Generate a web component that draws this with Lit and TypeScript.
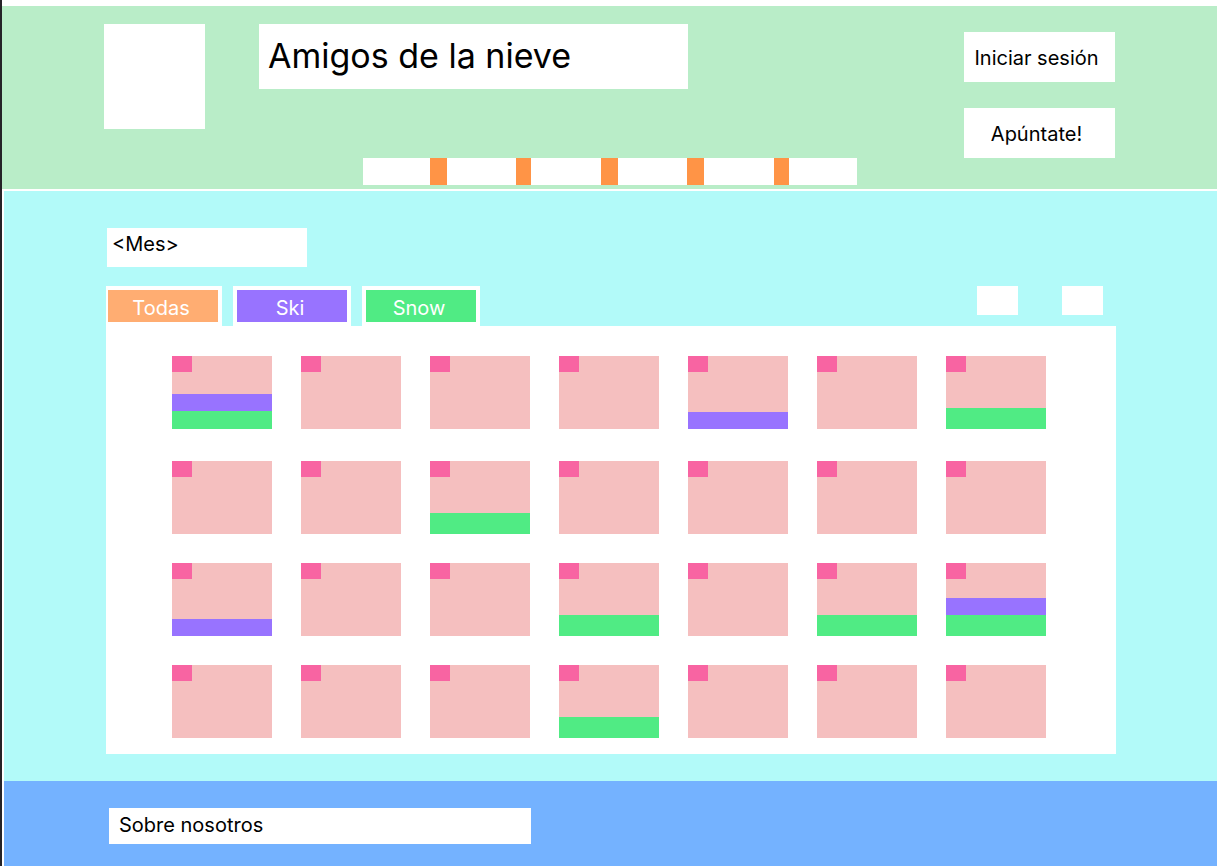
import { LitElement, html, css } from "lit";
import { customElement, state } from "lit/decorators.js";
import { classMap } from "lit/directives/class-map.js";

type Sport = "ski" | "snow";
type Filter = "todas" | Sport;

const FILTERS: { id: Filter; label: string }[] = [
  { id: "todas", label: "Todas" },
  { id: "ski", label: "Ski" },
  { id: "snow", label: "Snow" },
];

// Outings by day of the month.
const OUTINGS: Record<number, Sport[]> = {
  1: ["ski", "snow"],
  5: ["ski"],
  7: ["snow"],
  10: ["snow"],
  15: ["ski"],
  18: ["snow"],
  20: ["snow"],
  21: ["ski", "snow"],
  25: ["snow"],
};

const DAYS = Array.from({ length: 28 }, (_, i) => i + 1);
const SECTIONS = [1, 2, 3, 4, 5, 6];

@customElement("month-calendar")
export class MonthCalendar extends LitElement {
  static properties = { filter: { type: String } };
  declare filter: Filter;

  constructor() {
    super();
    this.filter = "todas";
  }

  static styles = css`
    :host {
      display: block;
      background: #fff;
      padding: 30px 70px 16px 66px;
    }
    .days {
      display: grid;
      grid-template-columns: repeat(7, 1fr);
      grid-template-rows: 105px 102px 102px 73px;
      column-gap: 29px;
      align-items: start;
      list-style: none;
      margin: 0;
      padding: 0;
    }
    .day {
      display: flex;
      flex-direction: column;
      height: 73px;
      background: #f5bfbf;
    }
    .number {
      width: 20px;
      height: 16px;
      margin-bottom: auto;
      background: #f864a2;
    }
    .outing {
      height: 17px;
    }
    .ski {
      background: #9873ff;
    }
    .snow {
      height: 21px;
      background: #50eb84;
    }
    .day:first-child .snow {
      height: 18px;
    }
  `;

  render() {
    return html`<ol class="days">
      ${DAYS.map((day) => {
        const outings = (OUTINGS[day] ?? []).filter(
          (s) => this.filter === "todas" || this.filter === s
        );
        return html`<li class="day">
          <span class="number"></span>
          ${outings.map((s) => html`<span class="outing ${s}"></span>`)}
        </li>`;
      })}
    </ol>`;
  }
}

@customElement("app-root")
export class AppRoot extends LitElement {
  @state() private filter: Filter = "todas";

  static styles = css`
    :host {
      display: flex;
      flex-direction: column;
      box-sizing: border-box;
      min-height: 100vh;
      padding: 6px 3px 0 0;
      border-left: 2px solid #252328;
      background: #fff;
      color: #000;
      font-family: Inter, "Liberation Sans", sans-serif;
      font-size: 20px;
      line-height: 24px;
    }
    button {
      font: inherit;
      color: inherit;
      border: 0;
      border-radius: 0;
      margin: 0;
      padding: 0;
      background: #fff;
      cursor: pointer;
    }
    header {
      background: #b9edc8;
      padding: 18px 102px 4px;
    }
    .top {
      display: flex;
      align-items: flex-start;
    }
    .logo {
      width: 101px;
      height: 105px;
      margin-right: 54px;
      background: #fff;
    }
    h1 {
      flex: 0 1 429px;
      box-sizing: border-box;
      margin: 0;
      padding: 12px 9px 13px;
      background: #fff;
      font-size: 34px;
      line-height: 40px;
      font-weight: 400;
    }
    .account {
      display: flex;
      flex-direction: column;
      gap: 26px;
      width: 151px;
      margin-left: auto;
      padding-top: 8px;
    }
    .account button {
      height: 50px;
      padding: 2px 6px 0 0;
      white-space: nowrap;
    }
    .sections {
      display: grid;
      grid-template-columns: 67fr 17fr 69fr 15fr 70fr 17fr 69fr 17fr 70fr 15fr 68fr;
      max-width: 494px;
      height: 27px;
      margin: 0 auto;
    }
    .sections a {
      background: #fff;
    }
    .divider {
      background: #ff9446;
    }
    main {
      margin: 2px 0 0 2px;
      padding: 37px 101px 27px 102px;
      background: #b2faf9;
    }
    h2 {
      box-sizing: border-box;
      width: 200px;
      height: 39px;
      margin: 0 0 19px 1px;
      padding: 4px 5px;
      background: #fff;
      font-size: 20px;
      font-weight: 400;
    }
    .toolbar {
      display: flex;
      align-items: flex-start;
      justify-content: space-between;
    }
    .tabs {
      display: flex;
      gap: 11px;
    }
    .tab {
      box-sizing: border-box;
      width: 118px;
      height: 40px;
      border: 4px solid #fff;
      padding: 4px 4px 0 0;
      color: #fff;
    }
    .tab:first-child {
      width: 116px;
      border-left-width: 2px;
    }
    .todas {
      background: #ffad72;
    }
    .ski {
      background: #9873ff;
    }
    .snow {
      background: #50eb84;
    }
    .pager {
      display: flex;
      gap: 44px;
      padding-right: 13px;
    }
    .pager button {
      width: 41px;
      height: 29px;
    }
    footer {
      flex: 1;
      margin-left: 2px;
      padding: 27px 105px 22px;
      background: #74b2ff;
    }
    .about {
      display: block;
      box-sizing: border-box;
      max-width: 422px;
      padding: 5px 10px 7px;
      background: #fff;
      color: inherit;
      text-decoration: none;
    }
  `;

  render() {
    return html`
      <header>
        <div class="top">
          <div class="logo"></div>
          <h1>Amigos de la nieve</h1>
          <div class="account">
            <button type="button">Iniciar sesión</button>
            <button type="button">Apúntate!</button>
          </div>
        </div>
        <nav class="sections">
          ${SECTIONS.map(
            (n, i) => html`${i > 0 ? html`<span class="divider"></span>` : ""}<a
                href="#seccion-${n}"
              ></a>`
          )}
        </nav>
      </header>
      <main>
        <h2>&lt;Mes&gt;</h2>
        <div class="toolbar">
          <div class="tabs">
            ${FILTERS.map(
              (f) => html`<button
                type="button"
                class=${classMap({ tab: true, [f.id]: true })}
                aria-pressed=${this.filter === f.id}
                @click=${() => (this.filter = f.id)}
              >${f.label}</button>`
            )}
          </div>
          <div class="pager">
            <button type="button" aria-label="Mes anterior"></button>
            <button type="button" aria-label="Mes siguiente"></button>
          </div>
        </div>
        <month-calendar .filter=${this.filter}></month-calendar>
      </main>
      <footer>
        <a class="about" href="#sobre-nosotros">Sobre nosotros</a>
      </footer>
    `;
  }
}
